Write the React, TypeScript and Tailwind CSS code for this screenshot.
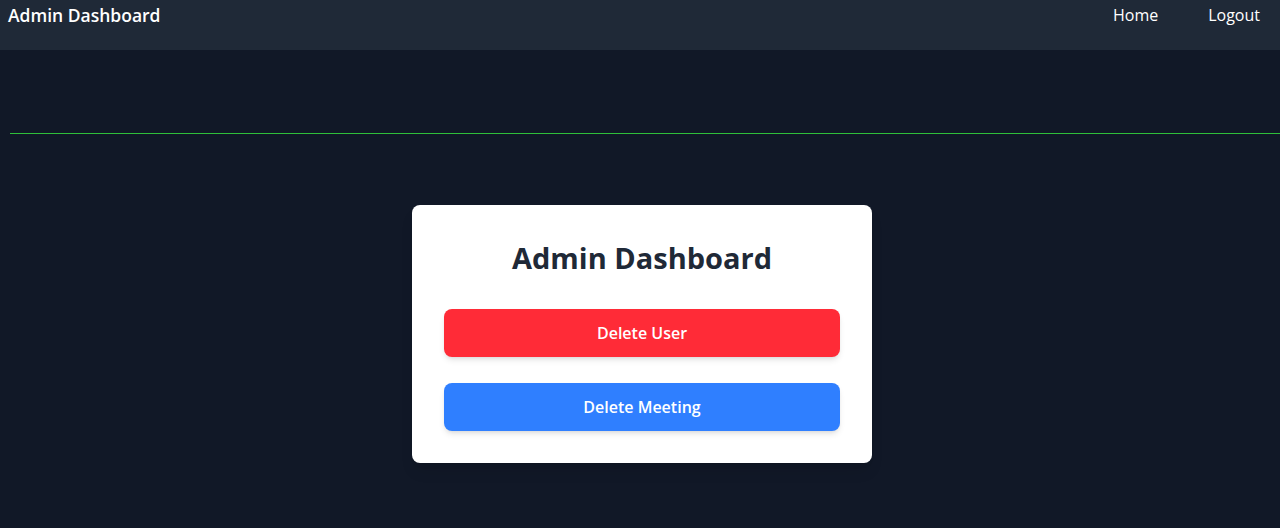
import React from 'react'

const font = { fontFamily: '"Open Sans", "Noto Sans", sans-serif' }

export default function App() {
  return (
    <div className="min-h-[528px] bg-[#111827] text-white" style={font}>
      {/* Navbar */}
      <nav className="h-[50px] bg-[#1f2937] flex items-start justify-between pl-2 pr-5 pt-[1px]">
        <span className="text-[17.5px] font-semibold leading-7">Admin Dashboard</span>
        <div className="flex gap-[50px] text-[16px] leading-7">
          <a href="#">Home</a>
          <a href="#">Logout</a>
        </div>
      </nav>

      {/* divider */}
      <div className="pt-[83px] pl-[10px]">
        <div className="h-px bg-[#2fbf3a]"></div>
      </div>

      {/* Card */}
      <div className="flex justify-center pt-[71px] pl-1">
        <div className="w-[460px] bg-white rounded-lg p-8 shadow-lg">
          <h2 className="text-center text-[29px] font-bold text-[#1f2937] leading-[41px] mb-[31px]">
            Admin Dashboard
          </h2>
          <div className="flex flex-col gap-[26px]">
            <button className="h-12 w-full rounded-lg bg-[#ff2b37] text-white font-semibold text-[16px] shadow-md">
              Delete User
            </button>
            <button className="h-12 w-full rounded-lg bg-[#2f7fff] text-white font-semibold text-[16px] shadow-md">
              Delete Meeting
            </button>
          </div>
        </div>
      </div>
    </div>
  )
}
